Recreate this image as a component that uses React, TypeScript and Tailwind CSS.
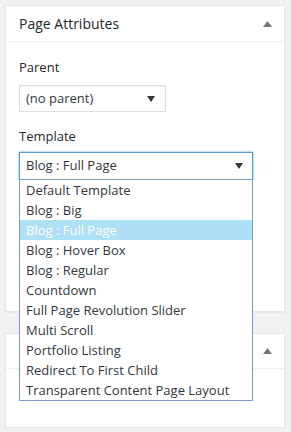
import React from "react";

const templates = [
  "Default Template",
  "Blog : Big",
  "Blog : Full Page",
  "Blog : Hover Box",
  "Blog : Regular",
  "Countdown",
  "Full Page Revolution Slider",
  "Multi Scroll",
  "Portfolio Listing",
  "Redirect To First Child",
  "Transparent Content Page Layout",
];

function Caret() {
  return (
    <svg width="8" height="6" viewBox="0 0 8 6">
      <path d="M0 0h8L4 6z" fill="#32373c" />
    </svg>
  );
}

function Toggle() {
  return (
    <svg width="9" height="6" viewBox="0 0 9 6">
      <path d="M4.5 0L9 6H0z" fill="#72777c" />
    </svg>
  );
}

export default function App() {
  const selected = 2;

  return (
    <div
      className="h-[432px] w-[291px] bg-[#f1f1f1] pl-[5px] pt-[5px] text-[#23282d]"
      style={{ fontFamily: '"Open Sans", "Noto Sans", sans-serif' }}
    >
      {/* Page Attributes box */}
      <div className="h-[307px] w-[280px] border border-[#e5e5e5] bg-white shadow-[0_1px_1px_rgba(0,0,0,0.04)]">
        <div className="flex h-[36px] items-center justify-between border-b border-[#eeeeee] pl-[13px] pr-[12px]">
          <span className="text-[14px] font-medium">Page Attributes</span>
          <Toggle />
        </div>

        <div className="px-[13px] pt-[15px]">
          <p className="text-[13px] leading-[20px]">Parent</p>
          <div className="mt-[8px] flex h-[27px] w-[147px] items-center justify-between border border-[#dddddd] pl-[6px] pr-[10px] shadow-[inset_0_1px_2px_rgba(0,0,0,0.07)]">
            <span className="text-[13px] text-[#32373c]">(no parent)</span>
            <Caret />
          </div>

          <p className="mt-[14px] text-[13px] leading-[20px]">Template</p>
          <div className="relative mt-[6px] w-[234px]">
            <div className="flex h-[28px] items-center justify-between border border-[#5b9dd9] pl-[6px] pr-[9px] shadow-[0_0_2px_rgba(30,140,190,0.8)]">
              <span className="text-[13px] text-[#32373c]">Blog : Full Page</span>
              <Caret />
            </div>

            {/* open dropdown list */}
            <ul className="absolute left-0 top-[27px] z-10 w-[234px] border border-[#7e9ad0] bg-white">
              {templates.map((t, i) => (
                <li
                  key={t}
                  className={
                    i === selected
                      ? "h-[20px] bg-[#aee0f6] pl-[6px] text-[13px] leading-[20px] text-white"
                      : "h-[20px] pl-[6px] text-[13px] leading-[20px] text-[#32373c]"
                  }
                >
                  {t}
                </li>
              ))}
            </ul>
          </div>
        </div>
      </div>

      {/* second collapsed box */}
      <div className="mt-[21px] h-[95px] w-[280px] border border-[#e5e5e5] bg-white">
        <div className="flex h-[35px] items-center justify-end border-b border-[#eeeeee] pr-[12px]">
          <Toggle />
        </div>
      </div>
    </div>
  );
}
